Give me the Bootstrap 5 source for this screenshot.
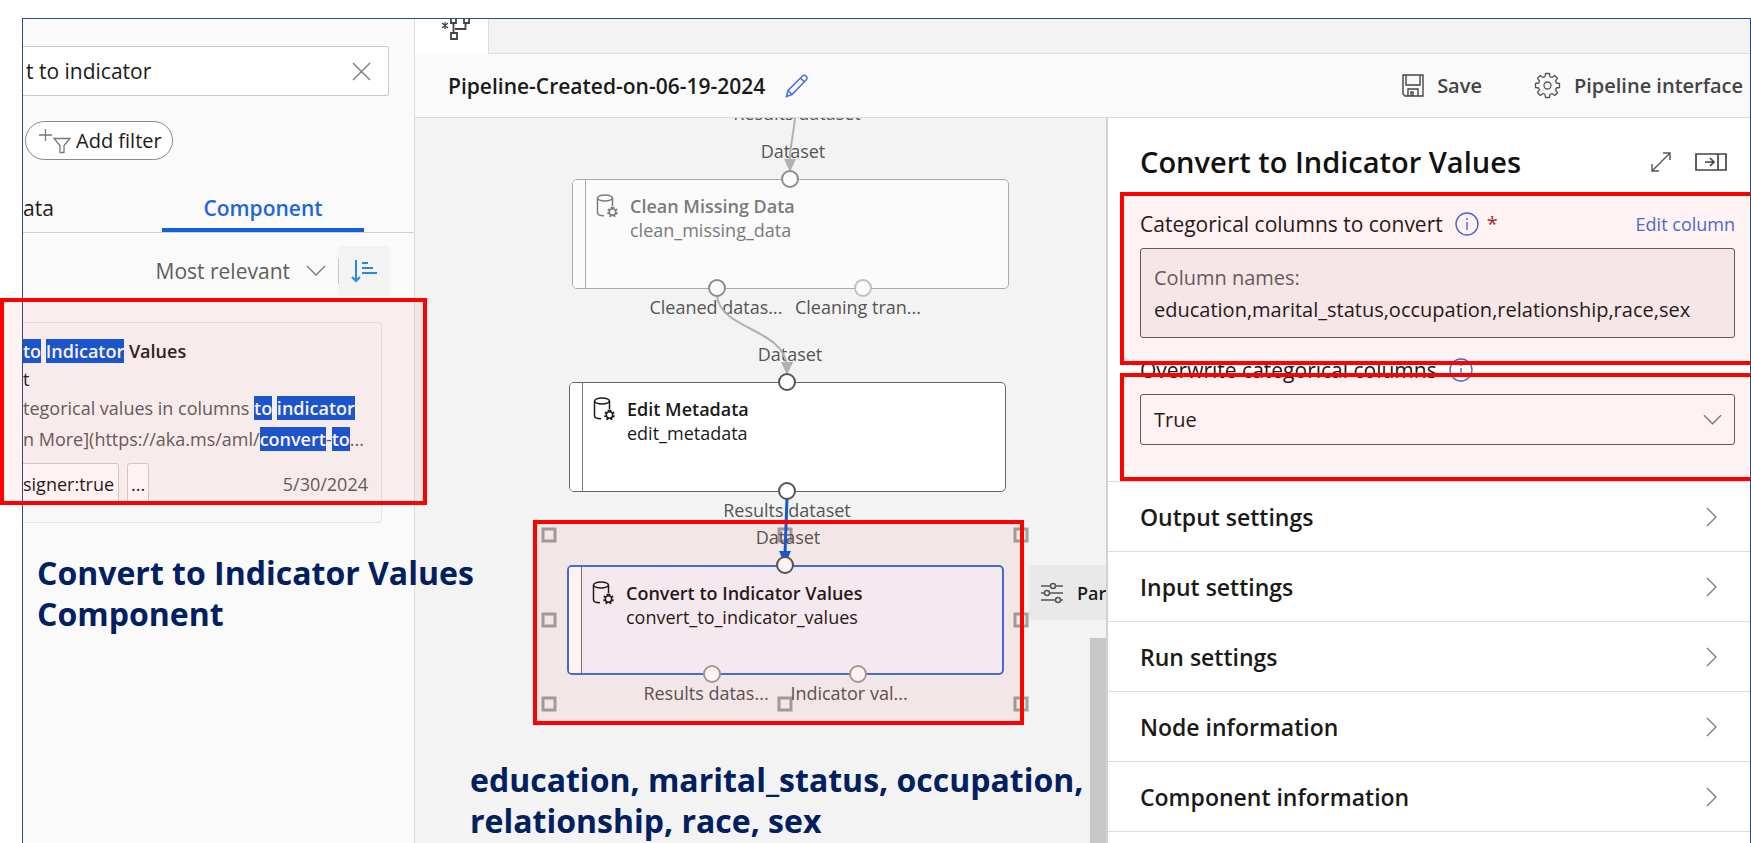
<!DOCTYPE html>
<html lang="en">
<head>
<meta charset="utf-8">
<meta name="viewport" content="width=device-width, initial-scale=1">
<title>Pipeline designer</title>
<link href="https://cdn.jsdelivr.net/npm/bootstrap@5.3.0/dist/css/bootstrap.min.css" rel="stylesheet">
<style>
  body { font-family: "Open Sans", "Noto Sans", sans-serif; font-size: 20px; line-height: 24px; color: #1b1a19; background: #fff; overflow: hidden; }
  svg { display: block; fill: none; flex: none; }
  button, select, input { color: inherit; }
  .semi { font-weight: 600; }
  .shell { height: 100vh; padding: 18px 0 0 22px; }
  .frame { border: 1px solid #2f4a86; border-bottom: 0; }
  /* left asset panel */
  .assets { flex: 0 0 392px; background: #fafafa; border-right: 1px solid #dcdcdc; }
  .search { height: 50px; margin: 27px 25px 25px 0; border: 1px solid #c8c8c8; border-left: 0; border-radius: 0 3px 3px 0; background: #fff; padding-right: 17px; }
  .search input { border: 0; outline: 0; padding: 0 0 0 3px; background: none; min-width: 0; font-size: 21px; }
  .pill { width: 148px; height: 39px; margin-left: 2px; border: 1px solid #8a8886; border-radius: 20px; background: #fff; padding: 0 0 0 13px; }
  .tabs { height: 49px; margin-top: 24px; border-bottom: 1px solid #d0d0d0; font-size: 21px; }
  .tabs button { border: 0; background: none; padding: 0; }
  .tabs .on { width: 202px; margin-right: 50px; color: #1f66dc; border-bottom: 4px solid #0f5fe0; padding-top: 4px; }
  .sortbar { height: 50px; margin: 13px 25px 26px 0; color: #605e5c; font-size: 21px; }
  .sortbar button { border: 0; background: none; color: inherit; }
  .sortbar .order { width: 50px; height: 50px; background: #f3f3f3; }
  .vline { width: 1px; height: 26px; background: #c8c8c8; }
  .result { height: 201px; margin-right: 32px; border: 1px solid #e6e6e6; border-left: 0; border-radius: 0 4px 4px 0; background: #f8f8f8; padding: 14px 13px 0 0; font-size: 18px; }
  .result .name { line-height: 28px; color: #252423; white-space: nowrap; }
  .result .desc { line-height: 31px; color: #605e5c; white-space: nowrap; }
  .hit { background: #0f5ad6; color: #fff; font-weight: 600; }
  .tagbox { height: 41px; border: 1px solid #d0d0d0; border-radius: 3px; background: #fff; padding: 0 3px; }
  .tagbox.cut { border-left: 0; border-radius: 0 3px 3px 0; padding: 0 4px 0 0; }
  /* header */
  .strip { height: 35px; background: #f3f3f3; }
  .strip .doc { width: 74px; background: #fff; border-right: 1px solid #dcdcdc; }
  .strip .rest { border-bottom: 1px solid #dcdcdc; }
  .toolbar { height: 64px; background: #fafafa; border-bottom: 1px solid #dcdcdc; padding: 0 7px 0 33px; }
  .toolbar button { border: 0; background: none; padding: 0; color: #444; gap: 13px; }
  .toolbar .title { font-size: 21px; }
  /* graph canvas */
  .graph { background: #f3f3f3; font-size: 18px; }
  .graph > * { position: absolute; }
  .cap { transform: translate(-50%, -50%); color: #555; white-space: nowrap; }
  .gnode { width: 437px; height: 110px; border: 1px solid #666; border-radius: 5px; background: #fff; overflow: hidden; }
  .gnode .grip { width: 13px; border-right: 1px solid #777; background: #fff; }
  .gnode .txt { padding: 14px 0 0 10px; }
  .gnode.dim { background: #fbfbfb; border-color: #aaa; color: #7a7a7a; }
  .gnode.dim .grip { border-color: #aaa; background: #fbfbfb; }
  .gnode.sel { background: #f3f6fb; border: 2px solid #3a72dc; }
  .knob { width: 15px; height: 15px; border: 3px solid #a0a0a0; background: #f3f3f3; transform: translate(-50%, -50%); }
  .panebtn { right: 0; width: 77px; height: 55px; background: #e9e9e9; border: 0; padding: 0 0 0 12px; gap: 14px; overflow: hidden; }
  .bar { right: 0; bottom: 0; top: 520px; width: 16px; background: #c8c8c8; }
  /* details drawer */
  .drawer { flex: 0 0 644px; background: #fff; border-left: 2px solid #d2d2d2; overflow: hidden; }
  .inner { padding: 21px 15px 0 32px; }
  .inner h1 { font-size: 29px; line-height: 45px; margin: 0; font-weight: 600; color: #111; }
  .cap2 { font-size: 21px; }
  .ibtn { border: 0; background: none; padding: 0; }
  .values { height: 90px; border: 1px solid #605e5c; border-radius: 3px; background: #f5f4f4; padding: 13px; line-height: 32px; white-space: nowrap; }
  .picker { height: 51px; width: 100%; appearance: none; border: 1px solid #605e5c; border-radius: 3px; background: #fff; padding: 0 13px; }
  .chev { position: absolute; right: 13px; top: 20px; pointer-events: none; }
  .more { border: 0; border-top: 1px solid #dcdcdc; background: #fff; height: 70px; padding: 0 32px; font-size: 23px; color: #1b1a19; }
  .rowset { margin-top: 36px; }
  /* annotations */
  .redbox { position: absolute; border: 4px solid #f00; background: rgba(255, 0, 0, .05); pointer-events: none; }
  .r1 { left: -23px; top: 279px; width: 427px; height: 207px; }
  .r2 { left: 118px; top: 402px; width: 491px; height: 205px; }
  .r3 { left: -20px; right: -20px; top: 0; bottom: -27px; }
  .r4 { left: -20px; right: -20px; top: -21px; bottom: -36px; }
  .note { position: absolute; font-size: 32px; line-height: 41px; font-weight: 700; color: #002060; white-space: nowrap; }
  .n1 { left: 14px; top: 533px; }
  .n2 { left: 55px; top: 641px; }
</style>
</head>
<body>
<svg width="0" height="0" class="position-absolute">
  <defs>
    <symbol id="db" viewBox="0 0 22 24"><g fill="none" stroke="currentColor" stroke-width="1.500"><ellipse cx="9" cy="4" rx="7.500" ry="3"/><path d="M1.500 4v15c0 1.600 3 2.700 6.500 2.800M16.500 4v8"/><circle cx="16.500" cy="18" r="3.200"/><path stroke-width="2" stroke-dasharray="1.800 1.800" d="M16.500 13.600a4.400 4.400 0 1 1-.1 0"/></g></symbol>
    <symbol id="down" viewBox="0 0 20 12"><path d="M1 1l9 9 9-9" fill="none" stroke="#777" stroke-width="1.300"/></symbol>
    <symbol id="right" viewBox="0 0 12 20"><path d="M1 1l9 9-9 9" fill="none" stroke="#777" stroke-width="1.300"/></symbol>
    <symbol id="info" viewBox="0 0 24 24"><g fill="none" stroke="#3f6fd8" stroke-width="1.400"><circle cx="12" cy="12" r="11"/><path d="M12 10v8M12 6v2"/></g></symbol>
  </defs>
</svg>
<div class="shell">
 <div class="frame d-flex h-100 position-relative">
  <aside class="assets">
    <div class="search d-flex align-items-center">
      <input type="text" class="flex-grow-1" aria-label="Search assets" value="t to indicator">
      <button class="ibtn" aria-label="Clear"><svg width="19" height="19" viewBox="0 0 19 19" stroke="#777" stroke-width="1.300"><path d="M1 1l17 17M18 1L1 18"/></svg></button>
    </div>
    <button class="pill d-flex align-items-center gap-1"><svg width="33" height="28" viewBox="0 0 33 28" stroke="#777" stroke-width="1.300"><path d="M0 8h13M6.500 2v12"/><path d="M15 11.500h16l-6 7v7h-4v-7z"/></svg><span class="text-nowrap">Add filter</span></button>
    <div class="tabs d-flex justify-content-between">
      <button>ata</button>
      <button class="on semi">Component</button>
    </div>
    <div class="sortbar d-flex align-items-center justify-content-end">
      <button class="d-flex align-items-center gap-3 p-0 me-2 text-nowrap">Most relevant <svg width="20" height="12"><use href="#down"/></svg></button>
      <span class="vline ms-1"></span>
      <button class="order d-flex align-items-center justify-content-center p-0" aria-label="Sort order"><svg width="28" height="26" viewBox="0 0 28 26" stroke="#2b88d8" stroke-width="2"><path d="M6 2v21M2 19l4 4 4-4M12 5h6M12 10h11M12 15h15"/></svg></button>
    </div>
    <div class="result">
      <div class="name semi"><span class="hit">to</span> <span class="hit">Indicator</span> Values</div>
      <div class="name">t</div>
      <div class="desc">tegorical values in columns <span class="hit">to</span> <span class="hit">indicator</span></div>
      <div class="desc">n More](https://aka.ms/aml/<span class="hit">convert</span>-<span class="hit">to</span>...</div>
      <div class="d-flex align-items-center mt-2">
        <span class="tagbox cut d-flex align-items-center me-2">signer:true</span>
        <span class="tagbox d-flex align-items-center">...</span>
        <span class="ms-auto" style="color:#605e5c">5/30/2024</span>
      </div>
    </div>
  </aside>

  <main class="flex-grow-1 d-flex flex-column" style="min-width:0">
    <div class="strip d-flex">
      <div class="doc"><svg width="34" height="23" viewBox="0 0 34 23" class="ms-4" stroke="#444" stroke-width="1.800"><path d="M3 4l6 5M9 4l-6 5M6 3v7" stroke-width="1.300"/><path d="M12 0v4h5V0M25 0v4h5V0M14.500 4v9M16 10h10.500V4M12 14h6v6h-6z"/></svg></div>
      <div class="rest flex-grow-1"></div>
    </div>
    <div class="toolbar d-flex align-items-center">
      <span class="title semi me-3">Pipeline-Created-on-06-19-2024</span>
      <button class="ms-1" aria-label="Rename"><svg width="24" height="24" viewBox="0 0 24 24" stroke="#3f73e0" stroke-width="1.500"><path d="M1.500 22.500l1.500-6L17.500 2c1.200-1 2.600-.8 3.600.2s1.100 2.500.2 3.600L7 20.500zM15.500 4l4 4M3 16.500l4 4"/></svg></button>
      <button class="d-flex align-items-center ms-auto me-5 semi"><svg width="22" height="23" viewBox="0 0 22 23" stroke="#444" stroke-width="1.400"><path d="M1 1h20v21H3l-2-2zM4 1v10h14V1M6 22v-7h10v7M9 22v-4h2v4"/></svg>Save</button>
      <button class="d-flex align-items-center semi ms-1"><svg width="27" height="27" viewBox="0 0 27 27" stroke="#555" stroke-width="1.300"><circle cx="13.500" cy="13.500" r="3.500"/><path stroke-linejoin="round" d="M11.500 1.500h4l.5 3.200 2 .8 2.700-2 2.800 2.800-2 2.700.8 2 3.200.5v4l-3.200.5-.8 2 2 2.700-2.800 2.800-2.700-2-2 .8-.5 3.200h-4l-.5-3.200-2-.8-2.700 2-2.800-2.800 2-2.700-.8-2-3.200-.5v-4l3.200-.5.8-2-2-2.700 2.800-2.800 2.700 2 2-.8z"/></svg>Pipeline interface</button>
    </div>

    <div class="d-flex flex-grow-1" style="min-height:0">
      <section class="graph flex-grow-1 position-relative overflow-hidden">
        <span class="cap" style="left:382px;top:-5px">Results dataset</span>
        <span class="cap" style="left:378px;top:33px">Dataset</span>
        <div class="gnode dim d-flex" style="left:157px;top:61px"><div class="grip"></div><div class="txt d-flex"><svg width="22" height="24" class="me-2"><use href="#db"/></svg><div class="ms-1"><div class="semi">Clean Missing Data</div><div>clean_missing_data</div></div></div></div>
        <span class="cap" style="left:301px;top:189px">Cleaned datas...</span>
        <span class="cap" style="left:443px;top:189px">Cleaning tran...</span>
        <span class="cap" style="left:375px;top:236px">Dataset</span>
        <div class="gnode d-flex" style="left:154px;top:264px"><div class="grip"></div><div class="txt d-flex"><svg width="22" height="24" class="me-2"><use href="#db"/></svg><div class="ms-1"><div class="semi">Edit Metadata</div><div>edit_metadata</div></div></div></div>
        <span class="knob" style="left:134px;top:417px"></span><span class="knob" style="left:370px;top:417px"></span><span class="knob" style="left:606px;top:417px"></span>
        <span class="knob" style="left:134px;top:502px"></span><span class="knob" style="left:606px;top:502px"></span>
        <span class="knob" style="left:134px;top:586px"></span><span class="knob" style="left:370px;top:586px"></span><span class="knob" style="left:606px;top:586px"></span>
        <span class="cap" style="left:372px;top:392px">Results dataset</span>
        <span class="cap" style="left:373px;top:419px">Dataset</span>
        <div class="gnode sel d-flex" style="left:152px;top:447px"><div class="grip"></div><div class="txt d-flex"><svg width="22" height="24" class="me-2"><use href="#db"/></svg><div class="ms-1"><div class="semi">Convert to Indicator Values</div><div>convert_to_indicator_values</div></div></div></div>
        <span class="cap" style="left:291px;top:575px">Results datas...</span>
        <span class="cap" style="left:434px;top:575px">Indicator val...</span>
        <svg class="start-0 top-0 w-100 h-100" stroke-width="2">
          <g stroke="#b3b1af"><path d="M380 0C378 20 375 28 375 42"/><path d="M302 178C306 212 368 210 372 248"/></g>
          <g fill="#b3b1af"><path d="M369 41h12l-6 13zM366 244h12l-6 13z"/></g>
          <path d="M372 380L370 436" stroke="#0f5ad6" stroke-width="3"/><path d="M364 433h12l-6 14z" fill="#0f5ad6"/>
          <g stroke="#8c8c8c" fill="#fbfbfb"><circle cx="375" cy="61" r="8"/><circle cx="302" cy="170" r="8"/><circle cx="448" cy="170" r="8" stroke="#c0c0c0"/></g>
          <g stroke="#555" fill="#fff"><circle cx="372" cy="264" r="8"/><circle cx="372" cy="373" r="8"/><circle cx="370" cy="447" r="8"/></g>
          <g stroke="#a0a0a0" fill="#fff"><circle cx="297" cy="556" r="8"/><circle cx="443" cy="556" r="8"/></g>
        </svg>
        <button class="panebtn d-flex align-items-center semi text-nowrap" style="top:447px"><svg width="22" height="22" viewBox="0 0 22 22" stroke="#555" stroke-width="1.500"><path d="M0 4h9M15 4h7M0 11h3M9 11h13M0 18h14M20 18h2"/><circle cx="12" cy="4" r="2.500"/><circle cx="6" cy="11" r="2.500"/><circle cx="17" cy="18" r="2.500"/></svg>Par</button>
        <div class="bar"></div>
        <div class="redbox r2"></div>
        <div class="note n2">education, marital_status, occupation,<br>relationship, race, sex</div>
      </section>

      <aside class="drawer">
        <div class="inner">
          <div class="d-flex align-items-center">
            <h1 class="me-auto">Convert to Indicator Values</h1>
            <button class="ibtn me-4" aria-label="Expand"><svg width="20" height="20" viewBox="0 0 20 20" stroke="#555" stroke-width="1.400"><path d="M1 19L19 1M12 1h7v7M1 12v7h7"/></svg></button>
            <button class="ibtn me-2" aria-label="Collapse"><svg width="32" height="18" viewBox="0 0 32 18" stroke="#444" stroke-width="1.700"><path d="M1 1h30v16H1zM23 1v16M10 9h9M15 5l4 4-4 4"/></svg></button>
          </div>
          <div class="position-relative mt-2 pt-3">
            <div class="d-flex align-items-center mb-2 pb-1 pt-1">
              <span id="colsLabel" class="cap2 me-2">Categorical columns to convert</span>
              <svg width="24" height="24" class="ms-1 me-2"><use href="#info"/></svg><span style="color:#a4262c">*</span>
              <a href="#" class="ms-auto text-decoration-none" style="color:#3f6fd8;font-size:18px">Edit column</a>
            </div>
            <div class="values" role="group" aria-labelledby="colsLabel"><div style="color:#605e5c">Column names:</div><div>education,marital_status,occupation,relationship,race,sex</div></div>
            <div class="redbox r3"></div>
          </div>
          <div class="d-flex align-items-center mt-3 pt-1 pb-2 mb-1">
            <label for="over" class="cap2 me-2">Overwrite categorical columns</label>
            <svg width="24" height="24" class="ms-1"><use href="#info"/></svg>
            <button class="ibtn ms-auto me-3" aria-label="More"><svg width="22" height="4" viewBox="0 0 22 4" fill="#555"><path d="M0 1h3v3H0zM9 1h3v3H9zM18 1h3v3h-3z"/></svg></button>
          </div>
          <div class="position-relative">
            <select id="over" class="picker"><option>True</option></select>
            <svg class="chev" width="19" height="12"><use href="#down"/></svg>
            <div class="redbox r4"></div>
          </div>
        </div>
        <div class="rowset">
          <button class="more semi w-100 d-flex align-items-center justify-content-between">Output settings<svg width="12" height="20"><use href="#right"/></svg></button>
          <button class="more semi w-100 d-flex align-items-center justify-content-between">Input settings<svg width="12" height="20"><use href="#right"/></svg></button>
          <button class="more semi w-100 d-flex align-items-center justify-content-between">Run settings<svg width="12" height="20"><use href="#right"/></svg></button>
          <button class="more semi w-100 d-flex align-items-center justify-content-between">Node information<svg width="12" height="20"><use href="#right"/></svg></button>
          <button class="more semi w-100 d-flex align-items-center justify-content-between">Component information<svg width="12" height="20"><use href="#right"/></svg></button>
          <div style="border-top:1px solid #dcdcdc"></div>
        </div>
      </aside>
    </div>
  </main>
  <div class="redbox r1"></div>
  <div class="note n1">Convert to Indicator Values<br>Component</div>
 </div>
</div>
<script src="https://cdn.jsdelivr.net/npm/bootstrap@5.3.0/dist/js/bootstrap.bundle.min.js"></script>
</body>
</html>
